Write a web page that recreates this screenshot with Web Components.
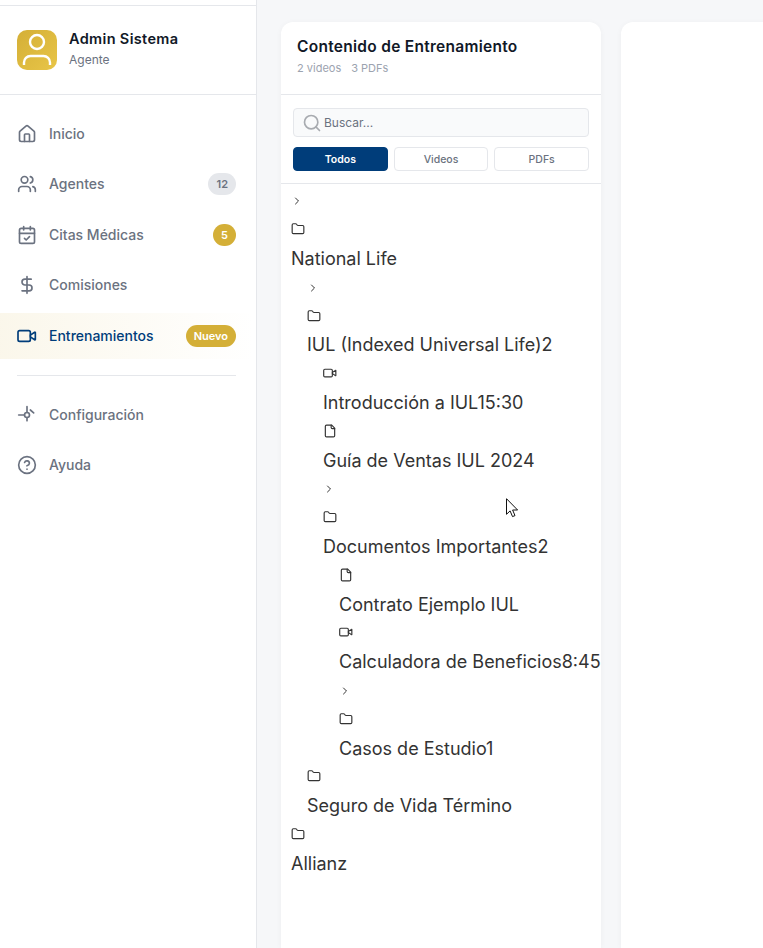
<!DOCTYPE html>
<html lang="es">
<head>
<meta charset="utf-8">
<title>Entrenamientos</title>
<style>
html, body {
	margin: 0;
	height: 948px;
	overflow: hidden;
	background: #f6f7f9;
	font-family: Inter, "Liberation Sans", sans-serif;
}
body {
	position: relative;
	display: flex;
}
.cursor {
	position: absolute;
	left: 506px;
	top: 498px;
}
</style>
</head>
<body>
<admin-sidebar></admin-sidebar>
<training-main></training-main>
<svg class="cursor" width="13" height="20" viewBox="0 0 13 20"><path d="M.5.7v15.6l3.6-3.4 2.4 5.7 2.5-1-2.4-5.6h5z" fill="#fff" stroke="#111" stroke-width="1"/></svg>

<script>
const icons = {
	home: '<path d="M15 21v-8a1 1 0 0 0-1-1h-4a1 1 0 0 0-1 1v8"/><path d="M3 10a2 2 0 0 1 .7-1.5l7-6a2 2 0 0 1 2.6 0l7 6A2 2 0 0 1 21 10v9a2 2 0 0 1-2 2H5a2 2 0 0 1-2-2z"/>',
	users: '<path d="M16 21v-2a4 4 0 0 0-4-4H6a4 4 0 0 0-4 4v2"/><circle cx="9" cy="7" r="4"/><path d="M22 21v-2a4 4 0 0 0-3-3.87"/><path d="M16 3.13a4 4 0 0 1 0 7.75"/>',
	calendar: '<path d="M8 2v4"/><path d="M16 2v4"/><rect x="3" y="4" width="18" height="18" rx="2"/><path d="M3 10h18"/><path d="m9 16 2 2 4-4"/>',
	dollar: '<path d="M12 2v20"/><path d="M17 5H9.5a3.5 3.5 0 0 0 0 7h5a3.5 3.5 0 0 1 0 7H6"/>',
	video: '<path d="m16 13 5.2 3.5a.5.5 0 0 0 .8-.4V7.9a.5.5 0 0 0-.8-.4L16 11"/><rect x="1.2" y="5.5" width="14.8" height="13" rx="2"/>',
	settings: '<path d="M12 2v7"/><path d="M12 15v4"/><circle cx="12" cy="12" r="3"/><path d="M2 12h7"/><path d="m16 6 4 3.500"/>',
	help: '<circle cx="12" cy="12" r="10"/><path d="M9.1 9a3 3 0 0 1 5.8 1c0 2-3 3-3 3"/><path d="M12 17h.01"/>',
	search: '<circle cx="11" cy="11" r="8"/><path d="m21 21-4.3-4.3"/>',
	chevron: '<path d="m9 18 6-6-6-6"/>',
	folder: '<path d="M20 20a2 2 0 0 0 2-2V8a2 2 0 0 0-2-2h-7.9a2 2 0 0 1-1.7-.9l-.8-1.2A2 2 0 0 0 7.9 3H4a2 2 0 0 0-2 2v13a2 2 0 0 0 2 2Z"/>',
	file: '<path d="M15 2H6a2 2 0 0 0-2 2v16a2 2 0 0 0 2 2h12a2 2 0 0 0 2-2V7Z"/><path d="M14 2v4a2 2 0 0 0 2 2h4"/>'
};

const svgIcon = (name, size) => `<svg width="${size}" height="${size}" viewBox="0 0 24 24" fill="none" stroke="currentColor" stroke-width="2" stroke-linecap="round" stroke-linejoin="round">${icons[name]}</svg>`;

class NavItem extends HTMLElement {
	connectedCallback() {
		const badge = this.getAttribute('badge');
		const tone = this.getAttribute('tone') || '';
		this.attachShadow({ mode: 'open' }).innerHTML = `
<style>
:host {
	display: flex;
	align-items: center;
	height: 46px;
	padding: 0 20px 0 17px;
	gap: 12px;
	font-size: 14px;
	font-weight: 500;
	color: #6b7280;
}
:host([active]) {
	color: #003d7a;
	background: linear-gradient(90deg, rgba(212, 175, 55, .1), rgba(212, 175, 55, 0));
}
svg { display: block; flex: none; }
.label { flex: 1; line-height: 18px; }
.badge {
	height: 22px;
	min-width: 23px;
	box-sizing: border-box;
	padding: 0 8px;
	border-radius: 11px;
	display: flex;
	align-items: center;
	justify-content: center;
	font-size: 11px;
	font-weight: 600;
}
.grey { background: #e5e7eb; color: #6b7280; }
.gold { background: #d4af37; color: #fff; }
</style>
${svgIcon(this.getAttribute('icon'), 20)}
<span class="label"><slot></slot></span>
${badge ? `<span class="badge ${tone}">${badge}</span>` : ''}`;
	}
}

class AdminSidebar extends HTMLElement {
	connectedCallback() {
		this.attachShadow({ mode: 'open' }).innerHTML = `
<style>
:host {
	display: block;
	flex: none;
	width: 256px;
	height: 948px;
	background: #fff;
	border-right: 1px solid #e5e7eb;
}
.top { height: 5px; border-bottom: 1px solid #e5e7eb; }
.user {
	height: 89px;
	box-sizing: border-box;
	border-bottom: 1px solid #e5e7eb;
	display: flex;
	align-items: center;
	gap: 12px;
	padding: 0 17px;
}
.avatar {
	width: 40px;
	height: 40px;
	border-radius: 10px;
	background: linear-gradient(135deg, #d4af37, #e8c547);
}
.avatar svg { display: block; }
.name { font-size: 14.500px; font-weight: 600; color: #111827; line-height: 20px; letter-spacing: .35px; margin-top: -2px; }
.role { font-size: 12px; color: #6b7280; line-height: 18px; margin-top: 2px; }
nav { display: flex; flex-direction: column; gap: 4.4px; padding: 16px 0 0; }
hr { border: 0; border-top: 1px solid #e5e7eb; margin: 11.6px 20px 11.6px 17px; }
</style>
<div class="top"></div>
<div class="user">
	<div class="avatar">
		<svg width="40" height="40" viewBox="0 0 40 40" fill="none" stroke="#fff" stroke-width="2.4"><circle cx="20" cy="12" r="7"/><path d="M7 35v-2.500a6.500 6.500 0 0 1 6.500-6.500h13a6.500 6.500 0 0 1 6.500 6.500V35"/></svg>
	</div>
	<div>
		<div class="name">Admin Sistema</div>
		<div class="role">Agente</div>
	</div>
</div>
<nav>
	<nav-item icon="home">Inicio</nav-item>
	<nav-item icon="users" badge="12" tone="grey">Agentes</nav-item>
	<nav-item icon="calendar" badge="5" tone="gold">Citas Médicas</nav-item>
	<nav-item icon="dollar">Comisiones</nav-item>
	<nav-item icon="video" badge="Nuevo" tone="gold" active>Entrenamientos</nav-item>
	<hr>
	<nav-item icon="settings">Configuración</nav-item>
	<nav-item icon="help">Ayuda</nav-item>
</nav>`;
	}
}

class FilterTab extends HTMLElement {
	connectedCallback() {
		this.attachShadow({ mode: 'open' }).innerHTML = `
<style>
:host {
	display: flex;
	align-items: center;
	justify-content: center;
	flex: 1;
	height: 24px;
	box-sizing: border-box;
	border: 1px solid #e5e7eb;
	border-radius: 4px;
	background: #fff;
	color: #6b7280;
	font-size: 10.500px;
	font-weight: 500;
}
:host([active]) {
	background: #003d7a;
	border-color: #003d7a;
	color: #fff;
	font-weight: 600;
}
</style>
<slot></slot>`;
	}
}

// each icon and each title sits on its own 28.8px line, the way the source tree renders
class TreeRow extends HTMLElement {
	connectedCallback() {
		const icon = this.getAttribute('icon');
		const level = Number(this.getAttribute('level') || 0);
		const size = icon === 'chevron' ? 12 : 14;
		this.attachShadow({ mode: 'open' }).innerHTML = `
<style>
:host {
	display: block;
	height: 28.8px;
	line-height: 28.8px;
	font-size: 18px;
	color: #333;
	padding-left: ${level * 16}px;
	white-space: nowrap;
}
</style>
${icon ? svgIcon(icon, size) : '<slot></slot>'}`;
	}
}

class TrainingPanel extends HTMLElement {
	connectedCallback() {
		const rows = [
			[0, 'chevron'], [0, 'folder'], [0, 'National Life'],
			[1, 'chevron'], [1, 'folder'], [1, 'IUL (Indexed Universal Life)2'],
			[2, 'video'], [2, 'Introducción a IUL15:30'],
			[2, 'file'], [2, 'Guía de Ventas IUL 2024'],
			[2, 'chevron'], [2, 'folder'], [2, 'Documentos Importantes2'],
			[3, 'file'], [3, 'Contrato Ejemplo IUL'],
			[3, 'video'], [3, 'Calculadora de Beneficios8:45'],
			[3, 'chevron'], [3, 'folder'], [3, 'Casos de Estudio1'],
			[1, 'folder'], [1, 'Seguro de Vida Término'],
			[0, 'folder'], [0, 'Allianz']
		];
		const tree = rows.map(([level, value]) => icons[value]
			? `<tree-row level="${level}" icon="${value}"></tree-row>`
			: `<tree-row level="${level}">${value}</tree-row>`).join('');
		this.attachShadow({ mode: 'open' }).innerHTML = `
<style>
:host {
	display: block;
	width: 320px;
	flex: none;
	background: #fff;
	border-radius: 12px 12px 0 0;
	box-shadow: 0 1px 6px rgba(0, 0, 0, .04);
}
header {
	height: 73px;
	box-sizing: border-box;
	padding: 15px 16px 0;
	border-bottom: 1px solid #e5e7eb;
}
h2 { margin: 0; font-size: 15.500px; line-height: 20px; font-weight: 600; color: #111827; letter-spacing: .28px; }
.counts { display: flex; gap: 10px; margin-top: 3px; font-size: 11px; line-height: 16px; color: #9ca3af; }
.filters {
	padding: 13px 12px 12px;
	border-bottom: 1px solid #e5e7eb;
}
.search {
	height: 29px;
	box-sizing: border-box;
	display: flex;
	align-items: center;
	gap: 2px;
	padding-left: 8px;
	border: 1px solid #e5e7eb;
	border-radius: 4px;
	background: #f9fafb;
	color: #a8abb0;
	font-size: 12px;
}
.search span { color: #6b7280; }
.tabs { display: flex; gap: 6px; margin-top: 10px; }
.tree { padding: 3.4px 10px 0; }
</style>
<header>
	<h2>Contenido de Entrenamiento</h2>
	<div class="counts"><span>2 videos</span><span>3 PDFs</span></div>
</header>
<div class="filters">
	<div class="search">${svgIcon('search', 20)}<span>Buscar...</span></div>
	<div class="tabs">
		<filter-tab active>Todos</filter-tab>
		<filter-tab>Videos</filter-tab>
		<filter-tab>PDFs</filter-tab>
	</div>
</div>
<div class="tree">${tree}</div>`;
	}
}

class TrainingMain extends HTMLElement {
	connectedCallback() {
		this.attachShadow({ mode: 'open' }).innerHTML = `
<style>
:host {
	display: flex;
	flex: 1;
	gap: 20px;
	padding: 22px 0 0 24px;
	min-width: 0;
	height: 926px;
	overflow: hidden;
}
.viewer {
	flex: none;
	width: 400px;
	background: #fff;
	border-radius: 12px 12px 0 0;
	box-shadow: 0 1px 6px rgba(0, 0, 0, .04);
}
</style>
<training-panel></training-panel>
<div class="viewer"></div>`;
	}
}

customElements.define('nav-item', NavItem);
customElements.define('admin-sidebar', AdminSidebar);
customElements.define('filter-tab', FilterTab);
customElements.define('tree-row', TreeRow);
customElements.define('training-panel', TrainingPanel);
customElements.define('training-main', TrainingMain);
</script>
</body>
</html>
